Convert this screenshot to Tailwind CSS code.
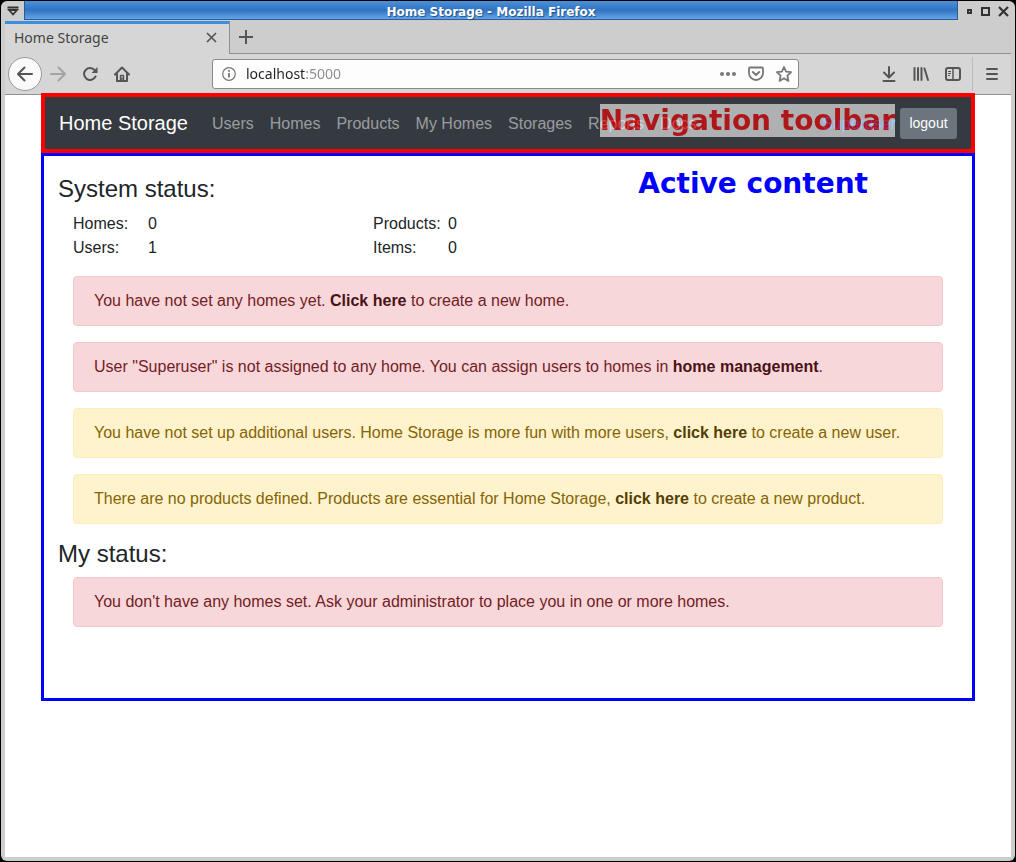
<!DOCTYPE html>
<html lang="en">
<head>
<meta charset="utf-8">
<title>Home Storage</title>
<script src="https://cdn.jsdelivr.net/npm/@tailwindcss/browser@4"></script>
</head>
<body class="bg-black p-px">
<div class="flex min-h-[calc(100vh-2px)] flex-col rounded-md bg-[#cdcdcd] px-1 pb-1 font-['Noto_Sans',sans-serif] text-sm text-[#444]">

  <header class="-ml-1 flex h-5 items-start">
    <button aria-label="Window menu" class="flex h-5 w-[23px] items-center justify-center">
      <svg width="12" height="10" viewBox="0 0 12 10" fill="none" stroke="#333"><path d="M.5 1.500h11" stroke-width="2"/><path d="M2 4h8L6 8.500z" stroke-width="1.800"/></svg>
    </button>
    <div class="flex h-[19px] flex-1 items-center justify-center border-x border-b border-[#2b5c96] bg-linear-to-b from-[#4d91da] via-[#2f74c0] to-[#64a4e8] pt-1 font-['DejaVu_Sans',sans-serif] text-xs font-bold text-white [text-shadow:1px_1px_1px_#1c4f8c]"><span>Home Storage - Mozilla Firefox</span></div>
    <div class="flex h-[21px] items-center gap-2 pr-[2px] pl-[9px]">
      <button aria-label="Minimize" class="h-[5px] w-[5px] border-2 border-[#333]"></button>
      <button aria-label="Maximize" class="ml-px h-[9px] w-[9px] border-2 border-[#333]"></button>
      <button aria-label="Close"><svg width="11" height="11" viewBox="0 0 11 11" stroke="#333" stroke-width="2.200"><path d="M1 1l9 9M10 1l-9 9"/></svg></button>
    </div>
  </header>

  <div class="flex h-[33px]">
    <div class="flex w-[225px] items-center justify-between border-t-3 border-r border-t-[#3e8ede] border-r-[#919191] bg-[#d6d6d6] pr-3 pb-[3px] pl-[9px]">
      <span>Home Storage</span>
      <button aria-label="Close tab"><svg width="11" height="11" viewBox="0 0 11 11" stroke="#555" stroke-width="1.700"><path d="M1 1l9 9M10 1l-9 9"/></svg></button>
    </div>
    <div class="flex flex-1 items-center border-b border-[#919191] pl-[9px]">
      <button aria-label="New tab"><svg width="14" height="14" viewBox="0 0 14 14" stroke="#555" stroke-width="2"><path d="M7 0v14M0 7h14"/></svg></button>
    </div>
  </div>

  <div class="flex h-[41px] items-center border-b border-[#919191] bg-[#d6d6d6] pr-3 pl-[3px] text-[#555]">
    <div class="flex w-[204px] items-center">
      <button aria-label="Back" class="flex h-[34px] w-[34px] items-center justify-center rounded-full border border-[#999] bg-[#fafafa]">
        <svg width="16" height="16" viewBox="0 0 16 16" fill="none" stroke="currentColor" stroke-width="2" stroke-linecap="round" stroke-linejoin="round"><path d="M15 8H1.500M7.500 1.500L1 8l6.500 6.500"/></svg>
      </button>
      <button aria-label="Forward" class="ml-2 text-[#a3a3a3]">
        <svg width="16" height="16" viewBox="0 0 16 16" fill="none" stroke="currentColor" stroke-width="2" stroke-linecap="round" stroke-linejoin="round"><path d="M1 8h13.500M8.500 1.500L15 8l-6.500 6.500"/></svg>
      </button>
      <button aria-label="Reload" class="ml-4">
        <svg width="16" height="16" viewBox="0 0 16 16" fill="none" stroke="currentColor" stroke-width="2" stroke-linecap="round"><path d="M13.500 10.500A6 6 0 1 1 13 4.500"/><path d="M15.500 1v6h-6z" fill="currentColor" stroke="none"/></svg>
      </button>
      <button aria-label="Home" class="ml-4">
        <svg width="16" height="16" viewBox="0 0 16 16" fill="none" stroke="currentColor" stroke-width="2" stroke-linecap="round" stroke-linejoin="round"><path d="M1 8.500L8 1.500l7 7M3 8v7h10V8"/><path d="M6.500 15V9.500h3V15" stroke-width="1.400"/><path d="M8 12v3" stroke-width="1.500"/></svg>
      </button>
    </div>
    <div class="flex h-[30px] flex-1 items-center rounded-[3px] border border-[#8a8a8a] bg-[#fdfdfd] pr-1.5 pl-[9px] text-[#777]">
      <svg width="14" height="14" viewBox="0 0 14 14" fill="none" stroke="currentColor"><circle cx="7" cy="7" r="6.300" stroke-width="1.200"/><path d="M7 6v4.500M7 3v1.700" stroke-width="1.800"/></svg>
      <input aria-label="Address" value="localhost:5000" class="ml-2.5 min-w-0 flex-1 bg-[linear-gradient(to_right,#222_59px,#8c8c8c_59px)] bg-clip-text text-transparent outline-none">
      <div class="flex items-center gap-3">
        <button aria-label="Page actions"><svg width="16" height="16" viewBox="0 0 16 16" fill="currentColor"><circle cx="2" cy="8" r="2"/><circle cx="8" cy="8" r="2"/><circle cx="14" cy="8" r="2"/></svg></button>
        <button aria-label="Save to Pocket"><svg width="16" height="16" viewBox="0 0 16 16" fill="none" stroke="currentColor" stroke-width="1.800" stroke-linecap="round" stroke-linejoin="round"><path d="M1 2.500q0-1 1-1h12q1 0 1 1V7a7 7 0 0 1-14 0z"/><path d="M4.800 6L8 9l3.200-3" stroke-width="2"/></svg></button>
        <button aria-label="Bookmark"><svg width="16" height="16" viewBox="0 0 16 16" fill="none" stroke="currentColor" stroke-width="1.800" stroke-linejoin="round"><path d="M8 1l2.100 4.700 5 .5-3.700 3.500 1 5.200L8 12.300 3.600 14.900l1-5.200L.9 6.200l5-.5z"/></svg></button>
      </div>
    </div>
    <div class="ml-[82px] flex items-center gap-4">
      <button aria-label="Downloads"><svg width="16" height="16" viewBox="0 0 16 16" fill="none" stroke="currentColor" stroke-width="2" stroke-linecap="round" stroke-linejoin="round"><path d="M8 1v10M3 6.500L8 11.500l5-5M2.500 15h11"/></svg></button>
      <button aria-label="Library"><svg width="16" height="16" viewBox="0 0 16 16" fill="none" stroke="currentColor" stroke-width="2" stroke-linecap="round"><path d="M1.500 2v12M5 2v12M8.500 2v12M11.500 2.500L15 14"/></svg></button>
      <button aria-label="Sidebars"><svg width="16" height="16" viewBox="0 0 16 16" fill="none" stroke="currentColor" stroke-width="2"><rect x="1" y="2" width="14" height="12" rx="2"/><path d="M8 2v12" stroke-width="1.500"/><path d="M3 5.500h3M3 7.500h3M3 9.500h2" stroke-width="1"/></svg></button>
    </div>
    <div class="ml-[11px] h-[34px] w-px bg-[#bbb]"></div>
    <button aria-label="Open menu" class="ml-3"><svg width="14" height="14" viewBox="0 0 14 14" stroke="currentColor" stroke-width="2" stroke-linecap="round"><path d="M2 2h10M2 7h10M2 12h10"/></svg></button>
  </div>

  <div class="flex-1 bg-white px-9 font-['Liberation_Sans',Arial,sans-serif] text-base text-[#212529]">
    <nav class="relative -mt-0.5 flex h-[60px] items-center border-4 border-[#f00] bg-[#343a40] px-3.5">
      <a href="#" class="mr-4 text-xl whitespace-nowrap text-white">Home Storage</a>
      <div class="flex flex-1 pt-0.5 whitespace-nowrap text-white/50">
        <a href="#" class="px-2">Users</a>
        <a href="#" class="px-2">Homes</a>
        <a href="#" class="px-2">Products</a>
        <a href="#" class="px-2">My Homes</a>
        <a href="#" class="px-2">Storages</a>
        <a href="#" class="px-2">Reports</a>
        <a href="#" class="px-2">Docs</a>
      </div>
      <a href="#" class="mr-1 pt-0.5 text-[#007bff]">Superuser</a>
      <button class="w-[57px] rounded-[3px] bg-[#6c757d] py-[5px] text-sm leading-[21px] text-white">logout</button>
      <div class="absolute top-[7px] right-[76px] bg-white font-['DejaVu_Sans',sans-serif] text-[28px] leading-[33px] font-bold whitespace-nowrap text-[#f00] opacity-60">Navigation toolbar</div>
    </nav>

    <main class="relative min-h-[548px] border-3 border-[#00f] px-3.5 pt-[18px]">
      <div class="absolute top-[11px] right-[104px] font-['DejaVu_Sans',sans-serif] text-[28px] leading-[33px] font-bold whitespace-nowrap text-[#00f]">Active content</div>
      <h1 class="mb-[9px] text-2xl leading-[29px]">System status:</h1>
      <dl class="mx-[15px] mb-4 grid grid-cols-[75px_225px_75px_1fr]">
        <dt>Homes:</dt><dd>0</dd><dt>Products:</dt><dd>0</dd>
        <dt>Users:</dt><dd>1</dd><dt>Items:</dt><dd>0</dd>
      </dl>
      <div class="mx-[15px] mb-[15px] flex flex-col gap-4">
        <p class="rounded border border-[#f5c6cb] bg-[#f8d7da] px-5 py-3 text-[#721c24]">You have not set any homes yet. <a href="#" class="font-bold text-[#491217]">Click here</a> to create a new home.</p>
        <p class="rounded border border-[#f5c6cb] bg-[#f8d7da] px-5 py-3 text-[#721c24]">User "Superuser" is not assigned to any home. You can assign users to homes in <a href="#" class="font-bold text-[#491217]">home management</a>.</p>
        <p class="rounded border border-[#ffeeba] bg-[#fff3cd] px-5 py-3 text-[#856404]">You have not set up additional users. Home Storage is more fun with more users, <a href="#" class="font-bold text-[#533f03]">click here</a> to create a new user.</p>
        <p class="rounded border border-[#ffeeba] bg-[#fff3cd] px-5 py-3 text-[#856404]">There are no products defined. Products are essential for Home Storage, <a href="#" class="font-bold text-[#533f03]">click here</a> to create a new product.</p>
      </div>
      <h1 class="mb-[9px] text-2xl leading-[29px]">My status:</h1>
      <p class="mx-[15px] rounded border border-[#f5c6cb] bg-[#f8d7da] px-5 py-3 text-[#721c24]">You don't have any homes set. Ask your administrator to place you in one or more homes.</p>
    </main>
  </div>
</div>
</body>
</html>
